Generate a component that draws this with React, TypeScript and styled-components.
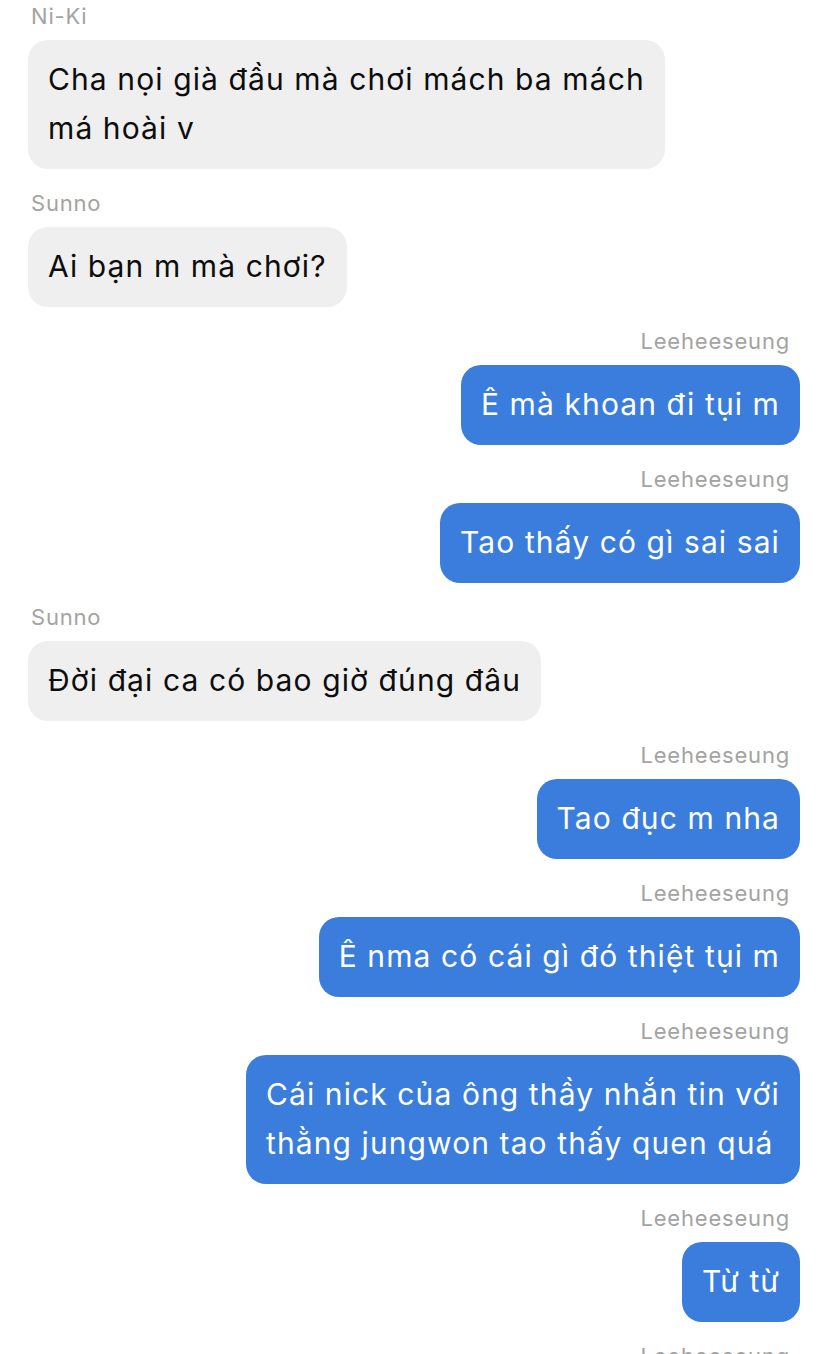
import React from "react";
import styled, { createGlobalStyle } from "styled-components";

const GlobalStyle = createGlobalStyle`
  html, body {
    margin: 0;
    padding: 0;
    background: #ffffff;
  }
  body {
    font-family: Inter, "Noto Sans", "Liberation Sans", sans-serif;
    -webkit-font-smoothing: antialiased;
  }
`;

type Side = "in" | "out";

const Thread = styled.div`
  display: flex;
  flex-direction: column;
  gap: 20px;
  padding: 2px 28px 0 28px;
  overflow: hidden;
  height: 1354px;
  box-sizing: border-box;
`;

const Group = styled.div<{ $side: Side }>`
  display: flex;
  flex-direction: column;
  align-items: ${(p) => (p.$side === "out" ? "flex-end" : "flex-start")};
  gap: 10px;
`;

const Sender = styled.div<{ $side: Side }>`
  font-size: 22px;
  line-height: 28px;
  letter-spacing: 0.8px;
  color: #a3a3a3;
  padding: ${(p) => (p.$side === "out" ? "0 10px 0 0" : "0 0 0 3px")};
`;

const Bubble = styled.div<{ $side: Side }>`
  max-width: 660px;
  box-sizing: border-box;
  padding: 15px 20px 16px 20px;
  border-radius: 20px;
  font-size: 30px;
  line-height: 49px;
  letter-spacing: 1.1px;
  background: ${(p) => (p.$side === "out" ? "#3a7ddc" : "#efefef")};
  color: ${(p) => (p.$side === "out" ? "#ffffff" : "#0d0d0d")};
  white-space: nowrap;
`;

type Msg = { sender: string; side: Side; lines: string[] };

const messages: Msg[] = [
  { sender: "Ni-Ki", side: "in", lines: ["Cha nọi già đầu mà chơi mách ba mách", "má hoài v"] },
  { sender: "Sunno", side: "in", lines: ["Ai bạn m mà chơi?"] },
  { sender: "Leeheeseung", side: "out", lines: ["Ê mà khoan đi tụi m"] },
  { sender: "Leeheeseung", side: "out", lines: ["Tao thấy có gì sai sai"] },
  { sender: "Sunno", side: "in", lines: ["Đời đại ca có bao giờ đúng đâu"] },
  { sender: "Leeheeseung", side: "out", lines: ["Tao đục m nha"] },
  { sender: "Leeheeseung", side: "out", lines: ["Ê nma có cái gì đó thiệt tụi m"] },
  {
    sender: "Leeheeseung",
    side: "out",
    lines: ["Cái nick của ông thầy nhắn tin với", "thằng jungwon tao thấy quen quá"],
  },
  { sender: "Leeheeseung", side: "out", lines: ["Từ từ"] },
];

export default function App() {
  return (
    <>
      <GlobalStyle />
      <Thread>
        {messages.map((m, i) => (
          <Group key={i} $side={m.side}>
            <Sender $side={m.side}>{m.sender}</Sender>
            <Bubble $side={m.side}>
              {m.lines.map((l, j) => (
                <React.Fragment key={j}>
                  {j > 0 && <br />}
                  {l}
                </React.Fragment>
              ))}
            </Bubble>
          </Group>
        ))}
        <Group $side="out">
          <Sender $side="out">Leeheeseung</Sender>
        </Group>
      </Thread>
    </>
  );
}
